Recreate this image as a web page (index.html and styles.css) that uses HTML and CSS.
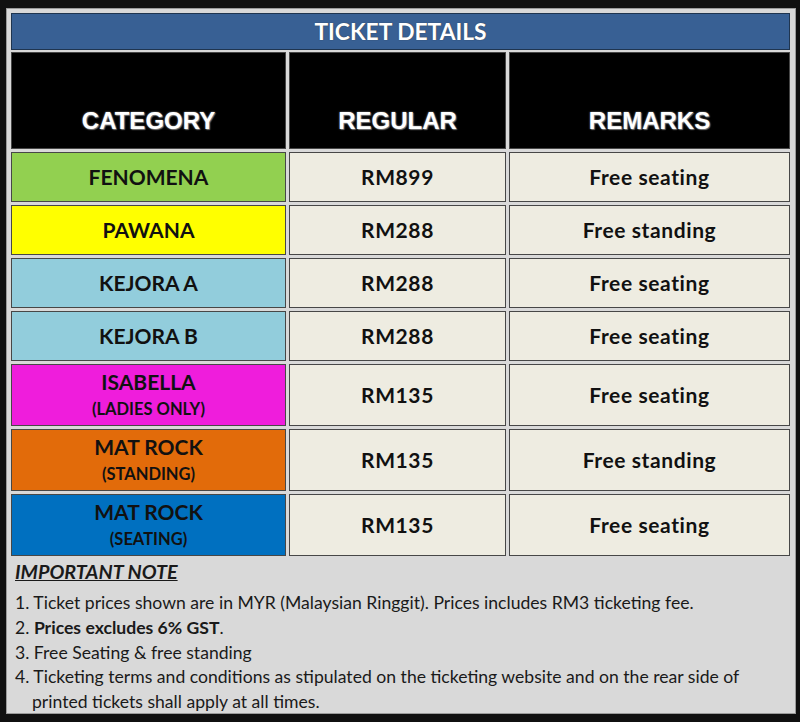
FILE: index.html
```html
<!DOCTYPE html>
<html>
<head>
<meta charset="utf-8">
<link rel="stylesheet" href="styles.css">
</head>
<body>
<div class="panel">
  <div class="title">TICKET DETAILS</div>
  <div class="grid">
    <div class="cell head">CATEGORY</div>
    <div class="cell head">REGULAR</div>
    <div class="cell head">REMARKS</div>

    <div class="cell cat green"><span class="main">FENOMENA</span></div>
    <div class="cell val">RM899</div>
    <div class="cell val">Free seating</div>

    <div class="cell cat yellow"><span class="main">PAWANA</span></div>
    <div class="cell val">RM288</div>
    <div class="cell val">Free standing</div>

    <div class="cell cat lblue"><span class="main">KEJORA A</span></div>
    <div class="cell val">RM288</div>
    <div class="cell val">Free seating</div>

    <div class="cell cat lblue"><span class="main">KEJORA B</span></div>
    <div class="cell val">RM288</div>
    <div class="cell val">Free seating</div>

    <div class="cell cat tall magenta"><span class="main">ISABELLA</span><span class="sub">(LADIES ONLY)</span></div>
    <div class="cell val tall">RM135</div>
    <div class="cell val tall">Free seating</div>

    <div class="cell cat tall orange"><span class="main">MAT ROCK</span><span class="sub">(STANDING)</span></div>
    <div class="cell val tall">RM135</div>
    <div class="cell val tall">Free standing</div>

    <div class="cell cat tall blue"><span class="main">MAT ROCK</span><span class="sub">(SEATING)</span></div>
    <div class="cell val tall">RM135</div>
    <div class="cell val tall">Free seating</div>
  </div>
  <div class="notes">
    <div class="note-title">IMPORTANT NOTE</div>
    <ol class="note-list">
      <li>1. Ticket prices shown are in MYR (Malaysian Ringgit). Prices includes RM3 ticketing fee.</li>
      <li>2. <b>Prices excludes 6% GST</b>.</li>
      <li>3. Free Seating &amp; free standing</li>
      <li class="hang">4. Ticketing terms and conditions as stipulated on the ticketing website and on the rear side of<br>printed tickets shall apply at all times.</li>
    </ol>
  </div>
</div>
</body>
</html>
```
FILE: styles.css
```css
html, body {
  margin: 0;
  padding: 0;
  background: #101010;
}
body {
  width: 800px;
  height: 722px;
  padding: 8px 0 0 6px;
  box-sizing: border-box;
  font-family: Lato, "Open Sans", sans-serif;
}
.panel {
  width: 790px;
  height: 706px;
  box-sizing: border-box;
  background: #d9d9d9;
  border: 1px solid #9a9a9a;
  padding: 4px 5px 0 4px;
}
.title {
  height: 37px;
  box-sizing: border-box;
  background: #386094;
  border: 1px solid #1f3550;
  color: #fff;
  font-weight: 700;
  font-size: 22.8px;
  line-height: 35px;
  text-align: center;
  text-shadow: 0 0 1px #333;
  margin-bottom: 2px;
}
.grid {
  display: grid;
  grid-template-columns: 275px 217px 281px;
  grid-template-rows: 97px 50px 50px 50px 50px 62px 62px 62px;
  gap: 3px;
}
.cell {
  box-sizing: border-box;
  border: 1px solid #474747;
  display: flex;
  flex-direction: column;
  align-items: center;
  justify-content: center;
  color: #111;
  font-weight: 700;
}
.head {
  background: #000;
  justify-content: flex-end;
  padding-bottom: 13px;
  color: #fff;
  font-family: "Liberation Sans", Arial, sans-serif;
  font-size: 24px;
  line-height: 28px;
  text-shadow: 0 0 2px #9a9a9a, 1px 1px 1px #6a6a6a;
}
.val {
  background: #eeece1;
  font-size: 21px;
  line-height: 26px;
  letter-spacing: 0.6px;
}
.cat .main {
  font-size: 21px;
  line-height: 26px;
}
.cat .sub {
  font-size: 16.5px;
  line-height: 26px;
}
.tall .main { line-height: 28px; }
.green { background: #92d050; }
.yellow { background: #ffff00; }
.lblue { background: #92cddc; }
.magenta { background: #ef1ddc; }
.orange { background: #e26b0a; }
.blue { background: #0070c0; }

.notes {
  padding: 3px 0 0 4px;
  color: #1a1a1a;
}
.note-title {
  font-size: 19.8px;
  line-height: 25px;
  font-weight: 700;
  font-style: italic;
  text-decoration: underline;
}
.note-list {
  list-style: none;
  margin: 7px 0 0;
  padding: 0;
  font-size: 17.6px;
  line-height: 24.8px;
}
.note-list b { font-weight: 700; }
.hang {
  padding-left: 17px;
  text-indent: -17px;
}
```
